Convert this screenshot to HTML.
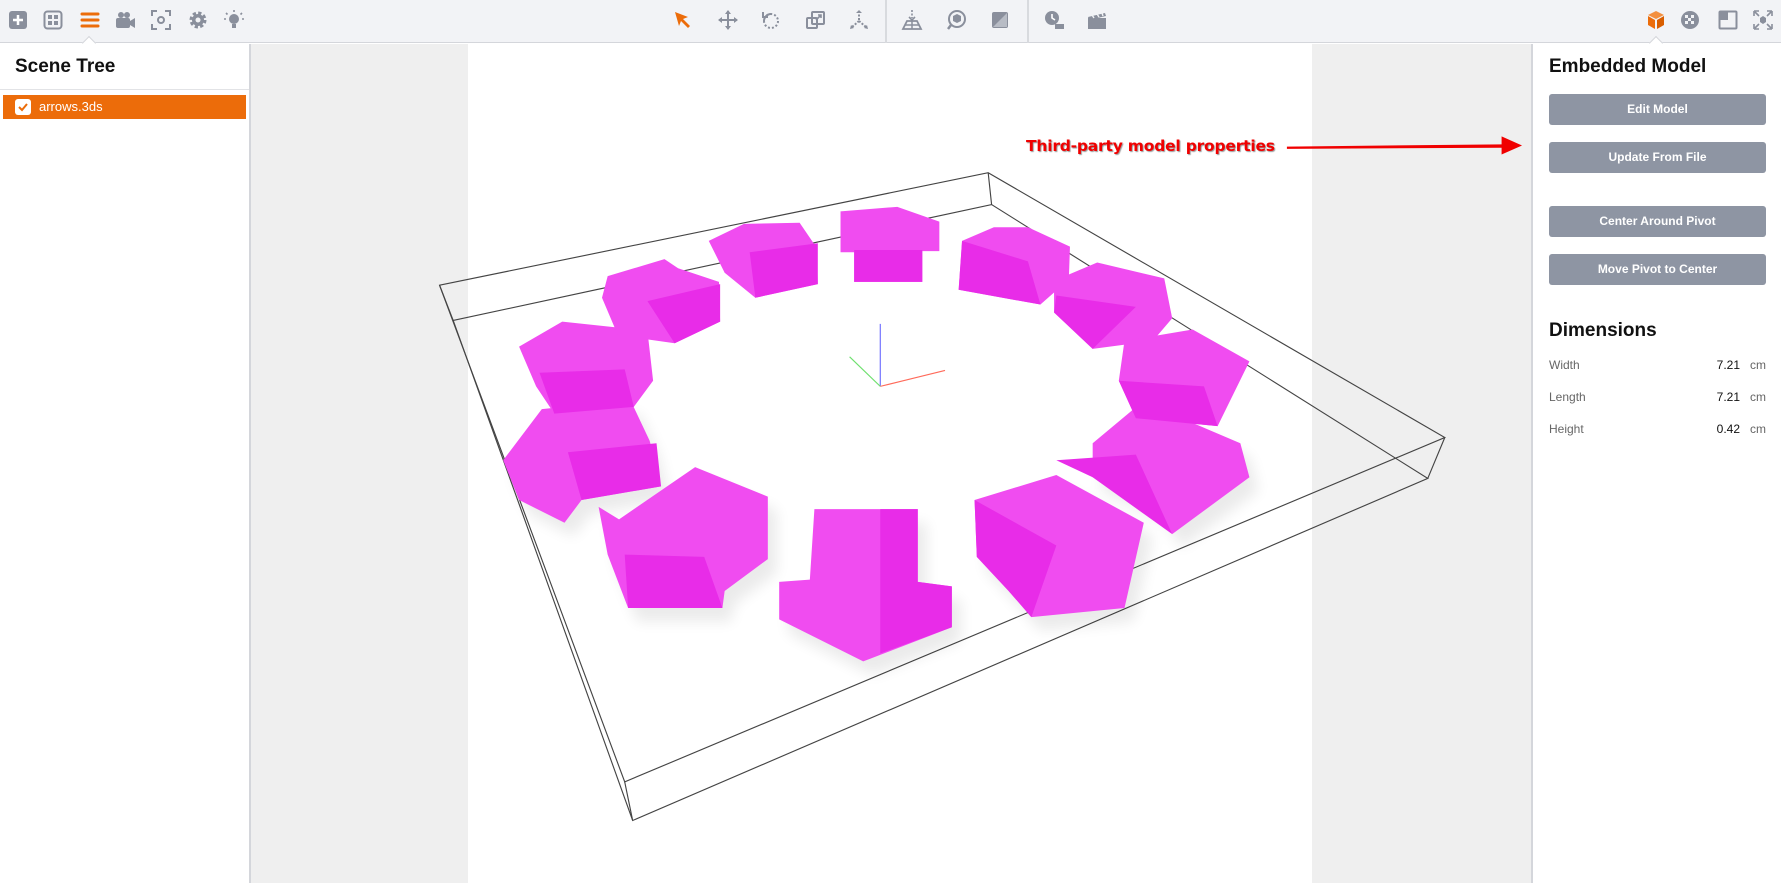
<!DOCTYPE html>
<html><head><meta charset="utf-8">
<style>
*{margin:0;padding:0;box-sizing:border-box}
body{width:1781px;height:883px;overflow:hidden;background:#fff;font-family:"Liberation Sans",sans-serif;position:relative}
#tb{position:absolute;left:0;top:0;width:1781px;height:43px;background:#f2f3f6;border-bottom:1px solid #d4d6db}
.sep{position:absolute;top:0;width:2px;height:43px;background:#d8dade}
#left{position:absolute;left:0;top:44px;width:251px;height:839px;background:#fff;border-right:2px solid #d4d6db}
#left h1{font-size:19px;font-weight:bold;color:#111;position:absolute;left:15px;top:12px}
#left .ln{position:absolute;left:0;top:45px;width:249px;height:1px;background:#e2e3e6}
#row{position:absolute;left:3px;top:51px;width:243px;height:24px;background:#ec6c0a;color:#fff;font-size:13px;line-height:24px;padding-left:36px}
#row .cb{position:absolute;left:12px;top:4px;width:16px;height:16px;background:#fff;border-radius:3px}
#vp{position:absolute;left:251px;top:44px;width:1280px;height:839px;background:#efefef}
#canvas{position:absolute;left:468px;top:44px;width:844px;height:839px;background:#fff}
#right{position:absolute;left:1531px;top:44px;width:250px;height:839px;background:#fff;border-left:2px solid #d4d6db}
#right h1{position:absolute;left:16px;font-size:19px;font-weight:bold;color:#111}
.btn{position:absolute;left:16px;width:217px;height:31px;background:#8e95a3;border-radius:3px;color:#fff;font-size:12px;font-weight:bold;text-align:center;line-height:31px}
.dr{position:absolute;left:16px;width:217px;font-size:12px;color:#666}
.dr b{position:absolute;right:26px;color:#111;font-weight:normal}
.dr span{position:absolute;right:0;color:#666}
svg.i{position:absolute;top:9px;width:22px;height:22px}
</style></head><body>
<div id="tb">
<svg class="i" style="left:7px" viewBox="0 0 22 22"><rect x="2" y="2" width="18" height="18" rx="3" fill="#8a8f9c"/><path d="M11 6v10M6 11h10" stroke="#fff" stroke-width="2.5"/></svg>
<svg class="i" style="left:42px" viewBox="0 0 22 22"><rect x="2.5" y="2.5" width="17" height="17" rx="3" fill="none" stroke="#8a8f9c" stroke-width="2"/><rect x="6" y="6" width="4" height="4" fill="#8a8f9c"/><rect x="12" y="6" width="4" height="4" fill="#8a8f9c"/><rect x="6" y="12" width="4" height="4" fill="#8a8f9c"/><rect x="12" y="12" width="4" height="4" fill="#8a8f9c"/></svg>
<svg class="i" style="left:79px" viewBox="0 0 22 22"><path d="M3 5h16M3 11h16M3 17h16" stroke="#ec6c0a" stroke-width="3" stroke-linecap="round"/></svg>
<svg class="i" style="left:114px" viewBox="0 0 22 22"><circle cx="7" cy="6" r="3" fill="#8a8f9c"/><circle cx="13" cy="6" r="3" fill="#8a8f9c"/><rect x="2" y="9" width="14" height="10" rx="2" fill="#8a8f9c"/><path d="M16 12l5-3v10l-5-3z" fill="#8a8f9c"/></svg>
<svg class="i" style="left:150px" viewBox="0 0 22 22"><path d="M2 7V2h5M15 2h5v5M20 15v5h-5M7 20H2v-5" fill="none" stroke="#8a8f9c" stroke-width="2"/><circle cx="11" cy="11" r="3" fill="none" stroke="#8a8f9c" stroke-width="2"/></svg>
<svg class="i" style="left:187px" viewBox="0 0 22 22"><circle cx="11" cy="11" r="6.5" fill="none" stroke="#8a8f9c" stroke-width="4" stroke-dasharray="3 2.1"/><circle cx="11" cy="11" r="6" fill="#8a8f9c"/><circle cx="11" cy="11" r="2.5" fill="#f2f3f6"/></svg>
<svg class="i" style="left:223px" viewBox="0 0 22 22"><circle cx="11" cy="10" r="5" fill="#8a8f9c"/><rect x="9" y="15" width="4" height="4" fill="#8a8f9c"/><path d="M11 1v2M3 4l1.5 1.5M19 4l-1.5 1.5M1 10h2M19 10h2" stroke="#8a8f9c" stroke-width="1.6"/></svg>
<div style="position:absolute;left:84px;top:38px;width:10px;height:10px;background:#fff;border-left:1px solid #d4d6db;border-top:1px solid #d4d6db;transform:rotate(45deg)"></div>

<svg class="i" style="left:672px" viewBox="0 0 22 22"><path d="M3 3l13 5-5 2 7 7-2 2-7-7-2 5z" fill="#ec6c0a"/></svg>
<svg class="i" style="left:717px" viewBox="0 0 22 22"><path d="M11 2v18M2 11h18" stroke="#8a8f9c" stroke-width="2"/><path d="M11 1l-3 4h6zM11 21l-3-4h6zM1 11l4-3v6zM21 11l-4-3v6z" fill="#8a8f9c"/></svg>
<svg class="i" style="left:760px" viewBox="0 0 22 22"><circle cx="11" cy="12" r="7" fill="none" stroke="#8a8f9c" stroke-width="2" stroke-dasharray="2 2"/><path d="M4 12A7 7 0 0 1 11 5" fill="none" stroke="#8a8f9c" stroke-width="2"/><path d="M3 3v5h5" fill="none" stroke="#8a8f9c" stroke-width="2"/></svg>
<svg class="i" style="left:805px" viewBox="0 0 22 22"><rect x="2" y="9" width="10" height="10" rx="1" fill="none" stroke="#8a8f9c" stroke-width="2"/><rect x="7" y="3" width="12" height="12" rx="1" fill="none" stroke="#8a8f9c" stroke-width="2"/><path d="M11 11l5-5M13 6h3v3" stroke="#8a8f9c" stroke-width="1.6" fill="none"/></svg>
<svg class="i" style="left:848px" viewBox="0 0 22 22"><path d="M11 2v10M11 12l-7 6M11 12l7 6" stroke="#8a8f9c" stroke-width="2" stroke-dasharray="2 1.5"/><path d="M11 1l-3 3h6zM2 20l1-4 3 3zM20 20l-1-4-3 3z" fill="#8a8f9c"/></svg>
<div class="sep" style="left:885px"></div>
<svg class="i" style="left:901px" viewBox="0 0 22 22"><path d="M11 1v8" stroke="#8a8f9c" stroke-width="1.6" stroke-dasharray="2 1.5"/><path d="M8 8l3 3 3-3" fill="none" stroke="#8a8f9c" stroke-width="1.6"/><path d="M6 12h10l4 8H2z" fill="none" stroke="#8a8f9c" stroke-width="1.8"/><path d="M11 12v8M4 16h14" stroke="#8a8f9c" stroke-width="1.5"/></svg>
<svg class="i" style="left:946px" viewBox="0 0 22 22"><circle cx="11" cy="10" r="8" fill="none" stroke="#8a8f9c" stroke-width="2"/><path d="M5 16l-3 4" stroke="#8a8f9c" stroke-width="2.5"/><path d="M11 5l4 2v5l-4 2-4-2V7z" fill="#8a8f9c"/></svg>
<svg class="i" style="left:989px" viewBox="0 0 22 22"><rect x="3" y="3" width="16" height="16" rx="2" fill="#8a8f9c"/><path d="M18 4L4 18h14z" fill="#b8bcc5"/></svg>
<div class="sep" style="left:1027px"></div>
<svg class="i" style="left:1043px" viewBox="0 0 22 22"><circle cx="9" cy="9" r="7" fill="#8a8f9c"/><path d="M9 5v4l3 2" stroke="#fff" stroke-width="1.6" fill="none"/><rect x="12" y="15" width="9" height="5" fill="#8a8f9c"/></svg>
<svg class="i" style="left:1086px" viewBox="0 0 22 22"><rect x="2" y="9" width="18" height="11" fill="#8a8f9c"/><path d="M2 8l17-4 1 3-17 4z" fill="#8a8f9c"/><path d="M6 6l2 3M11 5l2 3M16 4l1 3" stroke="#f2f3f6" stroke-width="1.4"/></svg>

<svg class="i" style="left:1645px" viewBox="0 0 22 22"><path d="M11 2l8 4-8 4-8-4z" fill="#f39040"/><path d="M3 7l7 4v9l-7-4z" fill="#ec6c0a"/><path d="M19 7l-7 4v9l7-4z" fill="#d95e00"/></svg>
<svg class="i" style="left:1679px" viewBox="0 0 22 22"><circle cx="11" cy="11" r="9" fill="#8a8f9c"/><g fill="#f2f3f6"><rect x="6" y="6" width="3" height="3"/><rect x="12" y="6" width="3" height="3"/><rect x="9" y="9" width="3" height="3"/><rect x="6" y="12" width="3" height="3"/><rect x="12" y="12" width="3" height="3"/></g></svg>
<svg class="i" style="left:1717px" viewBox="0 0 22 22"><rect x="2.5" y="2.5" width="17" height="17" rx="1" fill="none" stroke="#8a8f9c" stroke-width="2"/><path d="M3 11h8V3H3z" fill="#8a8f9c"/></svg>
<svg class="i" style="left:1752px" viewBox="0 0 22 22"><path d="M2 2h5M2 2v5M20 2h-5M20 2v5M2 20h5M2 20v-5M20 20h-5M20 20v-5M3 3l4 4M19 3l-4 4M3 19l4-4M19 19l-4-4" stroke="#8a8f9c" stroke-width="1.6"/><path d="M11 7l3 2v4l-3 2-3-2V9z" fill="#8a8f9c"/></svg>
<div style="position:absolute;left:1651px;top:38px;width:10px;height:10px;background:#fff;border-left:1px solid #d4d6db;border-top:1px solid #d4d6db;transform:rotate(45deg)"></div>
</div>

<div id="left"><h1>Scene Tree</h1><div class="ln"></div>
<div id="row"><div class="cb"><svg width="16" height="16" viewBox="0 0 16 16"><path d="M4 8l3 3 5-6" stroke="#ec6c0a" stroke-width="2" fill="none"/></svg></div>arrows.3ds</div></div>

<div id="vp"></div>
<div id="canvas"></div>

<svg style="position:absolute;left:0;top:0" width="1781" height="883" viewBox="0 0 1568 777" preserveAspectRatio="none">
<defs><filter id="sh"><feGaussianBlur stdDeviation="6"/></filter></defs>
<g fill="none" stroke="#444" stroke-width="1">
<path d="M387 251L870 152L1272 385L550 688Z"/>
<path d="M399 282L873 180L1257 421L557 722Z"/>
<path d="M387 251L399 282M870 152L873 180M1272 385L1257 421M550 688L557 722"/>
</g>
<g fill="#000" opacity="0.08" filter="url(#sh)" transform="translate(8,12)">
<path d="M717 448L808 448L808 512L838 516L838 552L760 582L686 545L686 512L713 510Z"/>
<path d="M527 446L545 457L612 411L676 437L676 492L638 520L636 535L553 535L535 488Z"/>
<path d="M443 405L477 360L555 352L572 388L582 428L512 440L497 460L457 440Z"/>
<path d="M858 440L930 418L1007 460L990 535L908 543L888 520L860 490Z"/>
<path d="M962 390L998 360L1045 370L1092 390L1100 420L1032 470L1018 448L962 420Z"/>
</g>
<g fill="#f04cf0">
<path d="M717 448L808 448L808 512L838 516L838 552L760 582L686 545L686 512L713 510Z"/>
<path d="M527 446L545 457L612 411L676 437L676 492L638 520L636 535L553 535L535 488Z"/>
<path d="M443 405L477 360L555 352L572 388L582 428L512 440L497 460L457 440Z"/>
<path d="M457 305L495 283L570 291L575 335L558 358L532 352L488 364L472 340Z"/>
<path d="M535 243L585 228L597 236L633 248L634 283L594 302L544 295L530 262Z"/>
<path d="M624 212L655 197L704 196L719 218L720 250L665 262L638 240Z"/>
<path d="M740 186L790 182L827 195L827 221L812 221L812 248L752 248L752 222L740 222Z"/>
<path d="M847 212L875 200L905 200L942 217L941 246L916 268L844 255Z"/>
<path d="M928 247L966 231L1025 245L1032 280L1015 300L962 307L928 275Z"/>
<path d="M990 300L1020 295L1050 290L1100 318L1072 375L1000 368L985 335Z"/>
<path d="M962 390L998 360L1045 370L1092 390L1100 420L1032 470L1018 448L962 420Z"/>
<path d="M858 440L930 418L1007 460L990 535L908 543L888 520L860 490Z"/>
</g>
<g fill="#e82ce8">
<path d="M775 448L808 448L808 512L838 516L838 552L775 575Z"/>
<path d="M550 488L620 490L636 535L553 535Z"/>
<path d="M500 398L578 390L582 428L512 440Z"/>
<path d="M475 328L550 325L558 358L488 364Z"/>
<path d="M570 265L634 250L634 283L594 302Z"/>
<path d="M660 222L720 214L720 250L665 262Z"/>
<path d="M752 220L812 220L812 248L752 248Z"/>
<path d="M930 405L1000 400L1032 470L962 420Z"/>
<path d="M858 440L930 480L908 543L888 520L860 490Z"/>
<path d="M930 260L1000 270L962 307L928 275Z"/>
<path d="M847 212L905 230L916 268L844 255Z"/>
<path d="M985 335L1060 340L1072 375L1000 368Z"/>
</g>
<path d="M775 285V340" stroke="#6b6bff" stroke-width="1"/>
<path d="M775 340L832 326" stroke="#ff6a5a" stroke-width="1"/>
<path d="M775 340L748 314" stroke="#6ee06e" stroke-width="1"/>
<path d="M1133 129L1322 127L1322 120L1340 128L1322 136L1322 130L1133 131Z" fill="#f00000"/>
</svg>
<div style="position:absolute;left:1026px;top:137px;font-size:15.5px;font-weight:bold;color:#f00000;text-shadow:1px 1px 1px #999;font-family:'DejaVu Sans',sans-serif;letter-spacing:-0.2px">Third-party model properties</div>

<div id="right">
<h1 style="top:12px">Embedded Model</h1>
<div class="btn" style="top:50px">Edit Model</div>
<div class="btn" style="top:98px">Update From File</div>
<div class="btn" style="top:162px">Center Around Pivot</div>
<div class="btn" style="top:210px">Move Pivot to Center</div>
<h1 style="top:276px">Dimensions</h1>
<div class="dr" style="top:314px">Width<b>7.21</b><span>cm</span></div>
<div class="dr" style="top:346px">Length<b>7.21</b><span>cm</span></div>
<div class="dr" style="top:378px">Height<b>0.42</b><span>cm</span></div>
</div>
</body></html>
